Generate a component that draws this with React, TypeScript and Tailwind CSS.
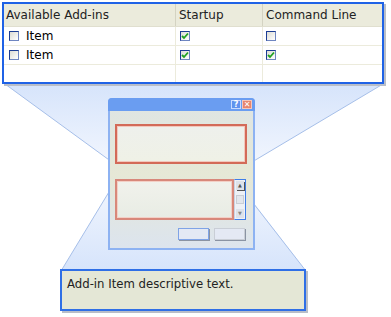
import React from "react";

const font = { fontFamily: '"DejaVu Sans", Verdana, sans-serif' };

function Check({ checked }: { checked: boolean }) {
  return (
    <span className="inline-flex h-[10px] w-[10px] items-center justify-center border border-[#1c3d93] border-r-[#6f86c0] border-b-[#6f86c0] bg-gradient-to-br from-[#dcdcd4] to-white">
      {checked && (
        <svg width="8" height="8" viewBox="0 0 8 8">
          <path d="M1 4 L3 6 L7 1.5" stroke="#21a121" strokeWidth="1.8" fill="none" />
        </svg>
      )}
    </span>
  );
}

function Row({ a, b, c, label, last }: { a: boolean; b: boolean; c: boolean; label?: string; last?: boolean }) {
  return (
    <div className={`flex ${last ? "h-[17px]" : "h-[19px] border-b border-[#ecebdc]"}`}>
      <div className="flex w-[172px] items-center gap-[7px] pl-[5px] border-r border-[#ecebdc]">
        {label !== undefined && (
          <>
            <Check checked={a} />
            <span className="text-[12px] text-black">{label}</span>
          </>
        )}
      </div>
      <div className="flex w-[87px] items-center pl-[4px] border-r border-[#ecebdc]">
        {label !== undefined && <Check checked={b} />}
      </div>
      <div className="flex flex-1 items-center pl-[3px]">
        {label !== undefined && <Check checked={c} />}
      </div>
    </div>
  );
}

export default function App() {
  return (
    <div className="relative h-[317px] w-[391px] overflow-hidden bg-white" style={font}>
      <svg className="absolute inset-0" width="391" height="317">
        <defs>
          <linearGradient id="g1" x1="0" y1="0" x2="0" y2="1">
            <stop offset="0" stopColor="#d6e4fb" />
            <stop offset="1" stopColor="#f2f6fe" />
          </linearGradient>
          <linearGradient id="g2" x1="0" y1="0" x2="0" y2="1">
            <stop offset="0" stopColor="#f2f6fe" />
            <stop offset="1" stopColor="#d6e4fb" />
          </linearGradient>
        </defs>
        <polygon points="5,84 383,84 247,165 116,165" fill="url(#g1)" />
        <line x1="5" y1="84" x2="116" y2="165" stroke="#a6bfe9" strokeWidth="1" />
        <line x1="383" y1="84" x2="247" y2="165" stroke="#a6bfe9" strokeWidth="1" />
        <polygon points="115,182 244,190 306,271 61,271" fill="url(#g2)" />
        <line x1="115" y1="182" x2="61" y2="271" stroke="#a6bfe9" strokeWidth="1" />
        <line x1="243" y1="190" x2="306" y2="271" stroke="#a6bfe9" strokeWidth="1" />
      </svg>

      <div className="relative flex flex-col">
        {/* Top list panel */}
        <div className="ml-[2px] mt-[2px] h-[82px] w-[382px] border-2 border-[#1f62e6] bg-white shadow-[2px_2px_0_#b9bec8]">
          <div className="flex h-[23px] bg-[#ebebdc] border-b border-[#e0dfcf] text-[12px] text-[#222]">
            <div className="flex w-[172px] items-center pl-[2px] border-r border-[#d4d3c2]">Available Add-ins</div>
            <div className="flex w-[87px] items-center pl-[3px] border-r border-[#d4d3c2]">Startup</div>
            <div className="flex flex-1 items-center pl-[3px]">Command Line</div>
          </div>
          <Row a={false} b={true} c={false} label="Item" />
          <Row a={false} b={true} c={true} label="Item" />
          <Row a={false} b={false} c={false} last />
        </div>

        {/* Dialog */}
        <div className="ml-[108px] mt-[14px] flex h-[152px] w-[147px] flex-col rounded-t-[4px] border-2 border-[#8db2f2] bg-gradient-to-b from-[#dfe5e4] via-[#e6e8d6] to-[#dce4ee]">
          <div className="-mx-[2px] -mt-[2px] flex h-[13px] items-start justify-end gap-[1px] rounded-t-[4px] bg-[#6a9df1] pl-[2px] pr-[3px] pt-[1px]">
            <span className="mt-[1px] flex h-[9px] w-[10px] items-center justify-center border border-[#c8dbff] bg-[#5f93ee] text-[8px] font-bold leading-none text-white">?</span>
            <span className="mt-[1px] flex h-[9px] w-[10px] items-center justify-center border border-[#f7c6bb] bg-[#e7866f] text-[8px] font-bold leading-none text-white">✕</span>
          </div>
          <div className="ml-[5px] mt-[13px] h-[40px] w-[132px] border-2 border-[#d36a58] bg-gradient-to-b from-[#eef0ec] to-[#eff1e6] shadow-[inset_0_0_0_1px_#f2c8bd]" />
          <div className="ml-[5px] mt-[15px] flex h-[41px] w-[131px]">
            <div className="h-full w-[119px] border-2 border-[#d8887a] bg-gradient-to-b from-[#f1f2ec] to-[#e8ece4] shadow-[inset_0_0_0_1px_#f3d0c6]" />
            <div className="flex h-full w-[12px] flex-col justify-between border border-[#3f7ee8] border-l-[#c9d4e4] bg-[#eef1f6] p-[1px]">
              <span className="flex h-[9px] w-full items-center justify-center bg-[#dde2ea] text-[5px] text-[#555] shadow-[1px_1px_0_#555]">▲</span>
              <span className="h-[9px] w-full border border-[#c9ced6] bg-[#e2e6ec]" />
              <span className="flex h-[9px] w-full items-center justify-center bg-[#dde2ea] text-[5px] text-[#888]">▼</span>
            </div>
          </div>
          <div className="ml-[68px] mt-[8px] flex gap-[5px]">
            <div className="h-[12px] w-[31px] border border-[#7fa3e6] bg-[#e4e9f4] shadow-[1px_1px_0_#8a93a3]" />
            <div className="h-[12px] w-[31px] border border-[#c9ced6] bg-[#e4e9f4] shadow-[1px_1px_0_#8a93a3]" />
          </div>
        </div>

        {/* Description panel */}
        <div className="ml-[60px] mt-[19px] h-[42px] w-[246px] border-2 border-[#2f6fe6] bg-[#e4e7d6] pl-[5px] pt-[5px] text-[11.7px] text-[#222] shadow-[2px_2px_0_#b9bec8]">
          Add-in Item descriptive text.
        </div>
      </div>
    </div>
  );
}
